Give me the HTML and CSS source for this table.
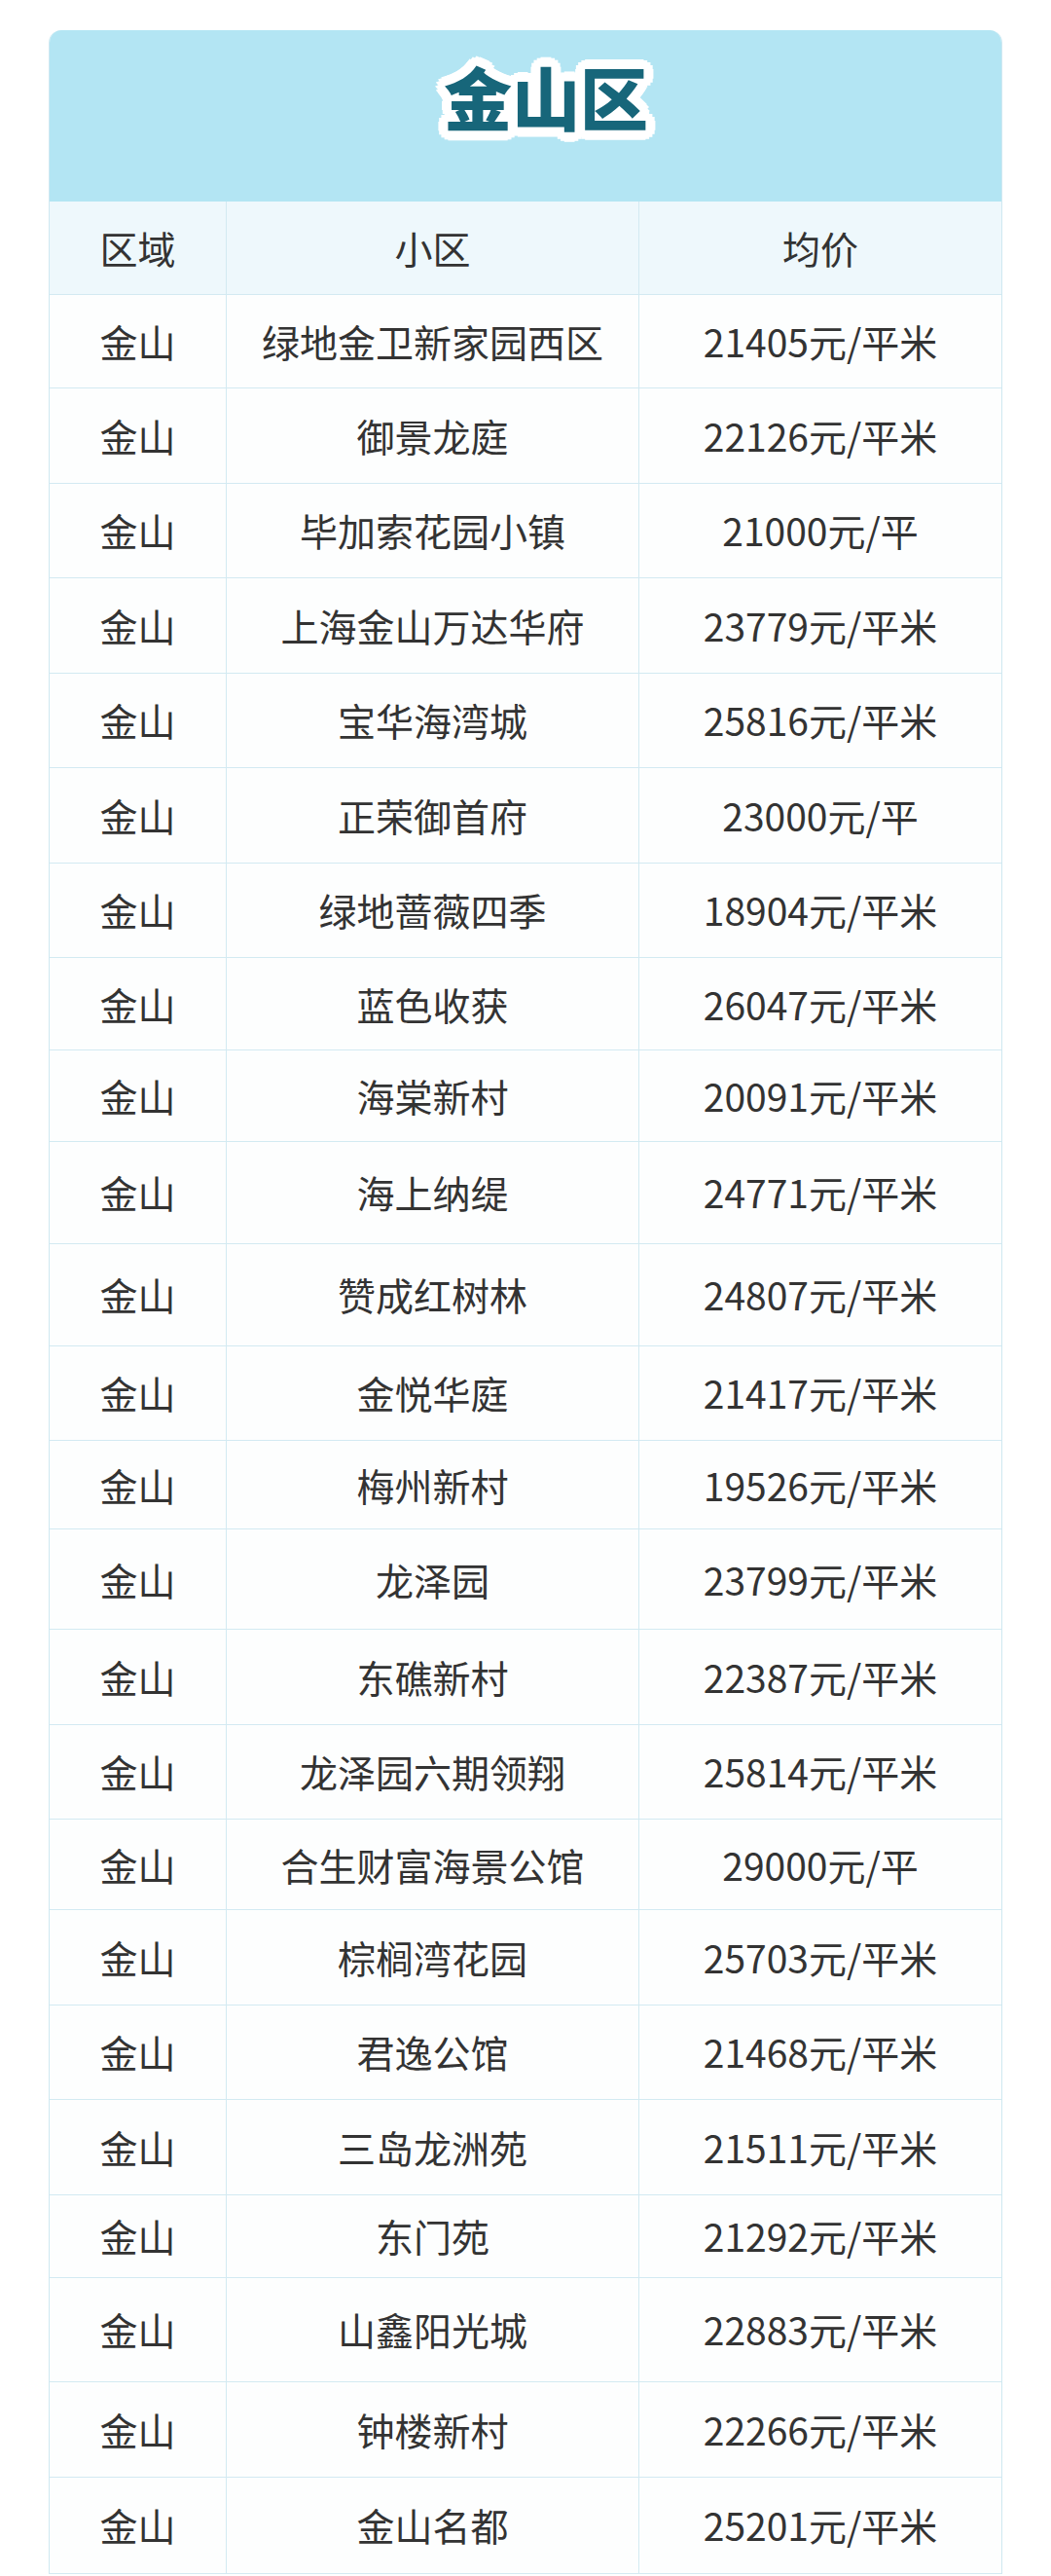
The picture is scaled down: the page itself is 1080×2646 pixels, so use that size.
FILE: index.html
```html
<!DOCTYPE html>
<html lang="zh-CN">
<head>
<meta charset="utf-8">
<title>金山区</title>
<link rel="stylesheet" href="styles.css">
</head>
<body>
<div class="card">
  <div class="band"><h1 class="title">金山区</h1></div>
  <div class="row head"><div class="cell">区域</div><div class="cell">小区</div><div class="cell">均价</div></div>
  <div class="rows">
    <div class="row"><div class="cell">金山</div><div class="cell">绿地金卫新家园西区</div><div class="cell">21405元/平米</div></div>
    <div class="row"><div class="cell">金山</div><div class="cell">御景龙庭</div><div class="cell">22126元/平米</div></div>
    <div class="row"><div class="cell">金山</div><div class="cell">毕加索花园小镇</div><div class="cell">21000元/平</div></div>
    <div class="row"><div class="cell">金山</div><div class="cell">上海金山万达华府</div><div class="cell">23779元/平米</div></div>
    <div class="row"><div class="cell">金山</div><div class="cell">宝华海湾城</div><div class="cell">25816元/平米</div></div>
    <div class="row"><div class="cell">金山</div><div class="cell">正荣御首府</div><div class="cell">23000元/平</div></div>
    <div class="row"><div class="cell">金山</div><div class="cell">绿地蔷薇四季</div><div class="cell">18904元/平米</div></div>
    <div class="row"><div class="cell">金山</div><div class="cell">蓝色收获</div><div class="cell">26047元/平米</div></div>
    <div class="row"><div class="cell">金山</div><div class="cell">海棠新村</div><div class="cell">20091元/平米</div></div>
    <div class="row"><div class="cell">金山</div><div class="cell">海上纳缇</div><div class="cell">24771元/平米</div></div>
    <div class="row"><div class="cell">金山</div><div class="cell">赞成红树林</div><div class="cell">24807元/平米</div></div>
    <div class="row"><div class="cell">金山</div><div class="cell">金悦华庭</div><div class="cell">21417元/平米</div></div>
    <div class="row"><div class="cell">金山</div><div class="cell">梅州新村</div><div class="cell">19526元/平米</div></div>
    <div class="row"><div class="cell">金山</div><div class="cell">龙泽园</div><div class="cell">23799元/平米</div></div>
    <div class="row"><div class="cell">金山</div><div class="cell">东礁新村</div><div class="cell">22387元/平米</div></div>
    <div class="row"><div class="cell">金山</div><div class="cell">龙泽园六期领翔</div><div class="cell">25814元/平米</div></div>
    <div class="row"><div class="cell">金山</div><div class="cell">合生财富海景公馆</div><div class="cell">29000元/平</div></div>
    <div class="row"><div class="cell">金山</div><div class="cell">棕榈湾花园</div><div class="cell">25703元/平米</div></div>
    <div class="row"><div class="cell">金山</div><div class="cell">君逸公馆</div><div class="cell">21468元/平米</div></div>
    <div class="row"><div class="cell">金山</div><div class="cell">三岛龙洲苑</div><div class="cell">21511元/平米</div></div>
    <div class="row"><div class="cell">金山</div><div class="cell">东门苑</div><div class="cell">21292元/平米</div></div>
    <div class="row"><div class="cell">金山</div><div class="cell">山鑫阳光城</div><div class="cell">22883元/平米</div></div>
    <div class="row"><div class="cell">金山</div><div class="cell">钟楼新村</div><div class="cell">22266元/平米</div></div>
    <div class="row"><div class="cell">金山</div><div class="cell">金山名都</div><div class="cell">25201元/平米</div></div>
  </div>
</div>
</body>
</html>
```
FILE: styles.css
```css
* { box-sizing: border-box; }
html, body { margin: 0; padding: 0; background: #ffffff; }
body {
  font-family: "Noto Sans CJK SC", "Noto Sans", sans-serif;
  color: #333333;
  overflow: hidden;
}
.card {
  width: 980px;
  margin: 31px 0 0 50px;
  border-radius: 13px 13px 0 0;
  overflow: hidden;
  border-left: 1px solid #cfe8f1;
  border-right: 1px solid #cfe8f1;
}
.band {
  height: 176px;
  background: #b3e5f3;
  padding: 33px 0 0 42px;
  text-align: center;
}
.title {
  margin: 0;
  font-size: 70px;
  line-height: 70px;
  font-weight: 900;
  color: #17667a;
  text-shadow:
    0 -10px 0 #fff, 3.8px -9.2px 0 #fff, 7.1px -7.1px 0 #fff, 9.2px -3.8px 0 #fff,
    10px 0 0 #fff, 9.2px 3.8px 0 #fff, 7.1px 7.1px 0 #fff, 3.8px 9.2px 0 #fff,
    0 10px 0 #fff, -3.8px 9.2px 0 #fff, -7.1px 7.1px 0 #fff, -9.2px 3.8px 0 #fff,
    -10px 0 0 #fff, -9.2px -3.8px 0 #fff, -7.1px -7.1px 0 #fff, -3.8px -9.2px 0 #fff,
    0 -5px 0 #fff, 5px 0 0 #fff, 0 5px 0 #fff, -5px 0 0 #fff,
    3.5px 3.5px 0 #fff, -3.5px 3.5px 0 #fff, 3.5px -3.5px 0 #fff, -3.5px -3.5px 0 #fff;
}
.row {
  display: grid;
  grid-template-columns: 182px 424px 372px;
  height: 97.5px;
  border-bottom: 1px solid #d3eaf2;
  background: #fdfefe;
}
.row.head {
  height: 96px;
  background: #eef8fc;
}
.cell {
  display: flex;
  align-items: center;
  justify-content: center;
  font-size: 39px;
  line-height: 1;
  white-space: nowrap;
  border-right: 1px solid #d3eaf2;
}
.cell:last-child { border-right: none; }
.rows .row:nth-child(1) { height: 96px; }
.rows .row:nth-child(8) { height: 95px; }
.rows .row:nth-child(9) { height: 94px; }
.rows .row:nth-child(10) { height: 104.5px; }
.rows .row:nth-child(11) { height: 105px; }
.rows .row:nth-child(13) { height: 91px; }
.rows .row:nth-child(14) { height: 103px; }
.rows .row:nth-child(17) { height: 93px; }
.rows .row:nth-child(21) { height: 85px; }
.rows .row:nth-child(22) { height: 107.5px; }
.rows .row:nth-child(24) { height: 99px; }
```
